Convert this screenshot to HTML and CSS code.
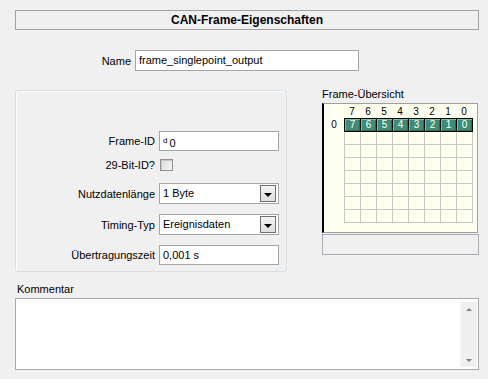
FILE: index.html
```
<!DOCTYPE html>
<html lang="de">
<head>
  <meta charset="UTF-8">
  <title>CAN-Frame-Eigenschaften</title>
  <link rel="stylesheet" href="styles.css">
</head>
<body>
  <div class="page">
    <div class="title">CAN-Frame-Eigenschaften</div>

    <div class="name-row">
      <span class="name-label">Name</span>
      <div class="field name-field">frame_singlepoint_output</div>
    </div>

    <div class="main">
      <!-- Eigenschaften -->
      <div class="group">
        <div class="row r-id">
          <span class="lbl">Frame-ID</span>
          <div class="field"><span class="base">d</span>0</div>
        </div>
        <div class="row r-ext">
          <span class="lbl">29-Bit-ID?</span>
          <span class="check"></span>
        </div>
        <div class="row r-len">
          <span class="lbl">Nutzdatenlänge</span>
          <div class="field select">1 Byte<span class="drop"></span></div>
        </div>
        <div class="row r-next">
          <span class="lbl">Timing-Typ</span>
          <div class="field select">Ereignisdaten<span class="drop"></span></div>
        </div>
        <div class="row r-next">
          <span class="lbl">Übertragungszeit</span>
          <div class="field">0,001 s</div>
        </div>
      </div>

      <!-- Frame-Übersicht -->
      <div class="overview">
        <div class="ov-label">Frame-Übersicht</div>
        <div class="ov-box">
          <div class="ov-head" id="ovHead"></div>
          <div class="ov-row">
            <span class="rn">0</span>
            <div class="bits" id="bits"></div>
          </div>
          <div class="empty" id="empty"></div>
        </div>
        <div class="ov-status"></div>
      </div>
    </div>

    <div class="comment-label">Kommentar</div>
    <div class="comment">
      <div class="scroll">
        <span class="arrow up"></span>
        <span class="arrow down"></span>
      </div>
    </div>
  </div>
  <script>
    const head = document.getElementById("ovHead");
    const bits = document.getElementById("bits");
    const empty = document.getElementById("empty");
    for (let i = 7; i >= 0; i--) {
      const h = document.createElement("span");
      h.textContent = i;
      head.appendChild(h);
      const b = document.createElement("span");
      b.className = "bit";
      b.textContent = i;
      bits.appendChild(b);
    }
    // 7 leere Zeilen a 8 Bits
    for (let i = 0; i < 56; i++) {
      const c = document.createElement("span");
      empty.appendChild(c);
    }
  </script>
</body>
</html>
```

FILE: styles.css
```
body {
  margin: 0;
  background: #f0f0f0;
  font-family: "Liberation Sans", Arial, sans-serif;
  font-size: 11px;
  color: #000;
}
.page {
  padding: 10px 9px 0 15px;
}
.title {
  box-sizing: border-box;
  height: 20px;
  border: 1px solid #a0a0a0;
  text-align: center;
  font-weight: bold;
  font-size: 12px;
  line-height: 18px;
}
.field {
  box-sizing: border-box;
  height: 20px;
  width: 120px;
  border: 1px solid #a5a5a5;
  background: #fff;
  padding-left: 3px;
  line-height: 18px;
  position: relative;
}
.name-row {
  display: flex;
  align-items: center;
  gap: 4px;
  margin-top: 20px;
}
.name-label {
  width: 116px;
  text-align: right;
}
.name-field {
  width: 224px;
  height: 21px;
  line-height: 19px;
}
.main {
  display: flex;
  gap: 35px;
  margin-top: 19px;
}
/* Gruppe links */
.group {
  box-sizing: border-box;
  width: 272px;
  height: 182px;
  border: 1px solid #d5dfe5;
  border-radius: 3px;
  box-shadow: inset 1px 1px 0 #fff;
  padding-top: 40px;
}
.row {
  display: flex;
  align-items: center;
  gap: 4px;
}
.lbl {
  width: 139px;
  text-align: right;
}
.r-ext {
  margin-top: 8px;
  height: 12px;
}
.r-len {
  margin-top: 12px;
}
.r-next {
  margin-top: 10px;
}
.base {
  font-size: 8px;
  vertical-align: 4px;
  margin-right: 2px;
}
.check {
  box-sizing: border-box;
  width: 13px;
  height: 12px;
  margin-left: 1px;
  border: 1px solid #8e8f8f;
  background: linear-gradient(135deg, #dcdcdc, #f6f6f6);
  box-shadow: inset 1px 1px 0 #c8c8c8;
}
.select {
  height: 21px;
  line-height: 19px;
}
.drop {
  position: absolute;
  right: 2px;
  top: 1px;
  box-sizing: border-box;
  width: 16px;
  height: 17px;
  border: 1px solid #707070;
  background: linear-gradient(#f4f4f4, #dedede);
}
.drop::after {
  content: "";
  position: absolute;
  left: 3px;
  top: 7px;
  border-left: 4px solid transparent;
  border-right: 4px solid transparent;
  border-top: 4px solid #000;
}
/* Übersicht rechts */
.overview {
  width: 157px;
  margin-top: -3px;
}
.ov-label {
  height: 16px;
  line-height: 15px;
}
.ov-box {
  box-sizing: border-box;
  width: 156px;
  height: 130px;
  background: #fffff0;
  border: 1px solid #a0a0a0;
  border-left: 2px solid #000;
}
.ov-head {
  display: flex;
  height: 14px;
  padding-left: 20px;
  font-size: 10px;
  line-height: 15px;
}
.ov-head span {
  width: 16px;
  text-align: center;
}
.ov-row {
  display: flex;
}
.rn {
  width: 20px;
  text-align: center;
  font-size: 10px;
  line-height: 13px;
}
.bits {
  display: flex;
  border: 1px solid #000;
  border-right: none;
}
.bit {
  box-sizing: border-box;
  width: 16px;
  height: 12px;
  border-right: 1px solid #000;
  background: #3c8c76;
  box-shadow: inset 1px 1px 0 #7cbcaa, inset -1px -1px 0 #2a6a58;
  color: #fff;
  font-size: 10px;
  line-height: 12px;
  text-align: center;
}
.empty {
  display: grid;
  grid-template-columns: repeat(8, 16px);
  margin-left: 20px;
  width: 129px;
  box-sizing: border-box;
  border-left: 1px solid #c8c8c8;
}
.empty span {
  box-sizing: border-box;
  height: 13px;
  border-right: 1px solid #c8c8c8;
  border-bottom: 1px solid #c8c8c8;
}
.ov-status {
  box-sizing: border-box;
  height: 21px;
  margin-top: 1px;
  border: 1px solid #aaaab4;
}
/* Kommentar */
.comment-label {
  margin-top: 10px;
  height: 16px;
  line-height: 15px;
  padding-left: 2px;
}
.comment {
  box-sizing: border-box;
  width: 464px;
  height: 72px;
  border: 1px solid #a8a8a8;
  background: #fff;
  display: flex;
  justify-content: flex-end;
  padding: 3px 1px 2px 0;
}
.scroll {
  width: 16px;
  background: #efefef;
  border-left: 1px solid #f6f6f6;
  display: flex;
  flex-direction: column;
  justify-content: space-between;
  align-items: center;
  padding: 6px 0 5px;
}
.arrow {
  width: 0;
  height: 0;
  border-left: 3px solid transparent;
  border-right: 3px solid transparent;
}
.up {
  border-bottom: 3px solid #808080;
}
.down {
  border-top: 3px solid #808080;
}
```
